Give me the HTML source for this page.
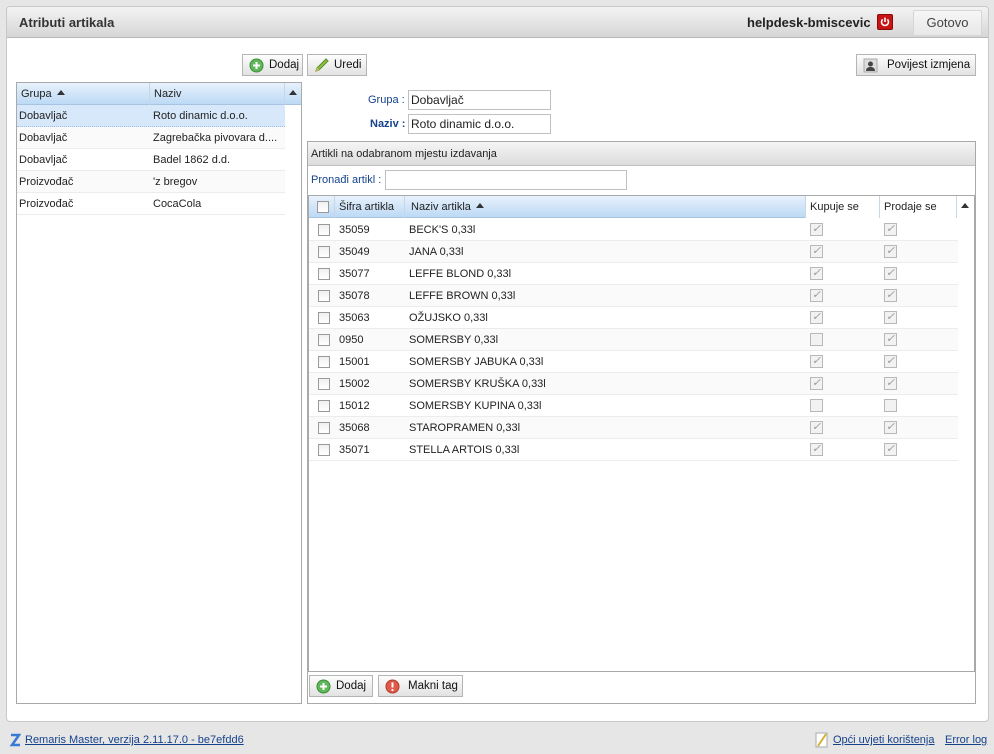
<!DOCTYPE html>
<html><head><meta charset="utf-8"><style>
*{box-sizing:border-box;margin:0;padding:0}
body{width:994px;height:754px;background:#e6e6e6;font-family:"Liberation Sans",Arial,sans-serif;font-size:11px;color:#222;position:relative;overflow:hidden}
.a{position:absolute}
.main{left:6px;top:6px;width:983px;height:716px;background:#fff;border:1px solid #c8c8c8;border-radius:4px}
.hdr{left:7px;top:7px;width:981px;height:31px;background:linear-gradient(#f3f3f3,#d6d6d6);border-bottom:1px solid #b8b8b8;border-radius:4px 4px 0 0}
.btn{position:absolute;height:22px;border:1px solid #b5b5b5;background:linear-gradient(#fdfdfd,#e2e2e2);font-size:11.5px;line-height:20px;padding-left:26px;color:#111;white-space:nowrap;overflow:hidden}
.btn svg{position:absolute;left:6px;top:3px}
.grid{border:1px solid #a9a9a9;background:#fff}
.gh{position:absolute;height:22px;background:linear-gradient(#e8f2fc,#bcd9f5);border-bottom:1px solid #a9c4e0;font-size:11px;line-height:22px}
.gh span{position:absolute;top:0;height:22px;padding-left:4px;border-right:1px solid #c6d6e6}
.row{position:absolute;height:22px;line-height:22px;border-bottom:1px solid #ececec;font-size:11px}
.row span{position:absolute;top:0}
.cb{position:absolute;width:12px;height:12px;border:1px solid #9a9a9a;background:linear-gradient(#f0f0f0,#fff)}
.ck{position:absolute;width:13px;height:13px;border:1px solid #b8b8b8;background:#f2f2f2;color:#999;font-size:11px;line-height:11px;text-align:center}
.inp{position:absolute;height:20px;border:1px solid #c0c0c0;background:#fff;font-size:12px;line-height:18px;padding-left:2px}
.arrow{display:inline-block;width:0;height:0;border-left:4px solid transparent;border-right:4px solid transparent;border-bottom:5px solid #333;vertical-align:2px;margin-left:5px}
</style></head><body>
<div class="a main"></div>
<div class="a hdr"></div>
<div class="a" style="left:19px;top:15px;font-size:13px;font-weight:bold;color:#333">Atributi artikala</div>
<div class="a" style="left:747px;top:15px;font-size:13px;font-weight:bold;color:#222">helpdesk-bmiscevic</div>
<div class="a" style="left:877px;top:14px;width:16px;height:16px;background:#c81414;border:1px solid #8a0a0a;border-radius:2px"><svg width="14" height="14" viewBox="0 0 16 16"><path d="M5.3 5 A4 4 0 1 0 10.7 5" stroke="#fff" stroke-width="1.8" fill="none"/><path d="M8 3v5" stroke="#fff" stroke-width="1.8"/></svg></div>
<div class="a" style="left:913px;top:10px;width:69px;height:26px;background:linear-gradient(#f6f6f6,#e8e8e8);border:1px solid #d6d6d6;border-radius:2px;font-size:13px;color:#444;text-align:center;line-height:24px">Gotovo</div>

<div class="btn" style="left:242px;top:54px;width:61px"><svg width="15" height="15"><circle cx="7.5" cy="7.5" r="6.5" fill="#5fb85a" stroke="#3d8c3a"/><path d="M7.5 4v7M4 7.5h7" stroke="#fff" stroke-width="2"/></svg>Dodaj</div>
<div class="btn" style="left:307px;top:54px;width:60px"><svg width="16" height="15"><path d="M2 13l3-1 9-9-2-2-9 9z" fill="#8cc63f" stroke="#5a8a2a"/><path d="M2 13l1-3 2 2z" fill="#e8c070"/></svg>Uredi</div>
<div class="btn" style="left:856px;top:54px;width:120px;padding-left:30px"><svg width="15" height="15"><rect x="1" y="1" width="13" height="13" fill="#ddd" stroke="#aaa"/><circle cx="7.5" cy="6" r="2.5" fill="#444"/><path d="M3 13c0-3 2-4 4.5-4s4.5 1 4.5 4z" fill="#444"/></svg>Povijest izmjena</div>

<div class="a grid" style="left:16px;top:82px;width:286px;height:622px"></div>
<div class="gh" style="left:17px;top:83px;width:284px"><span style="left:0;width:133px">Grupa<i class="arrow"></i></span><span style="left:133px;width:135px">Naziv</span><span style="left:268px;width:16px;border:none;padding-left:4px"><i class="arrow" style="margin:0"></i></span></div>
<div class="row" style="left:17px;top:105px;width:268px;background:#d6e8fa;border-bottom:1px dotted #a0bfe0"><span style="left:2px">Dobavljač</span><span style="left:136px">Roto dinamic d.o.o.</span></div>
<div class="row" style="left:17px;top:127px;width:268px;background:#fafafa"><span style="left:2px">Dobavljač</span><span style="left:136px">Zagrebačka pivovara d....</span></div>
<div class="row" style="left:17px;top:149px;width:268px"><span style="left:2px">Dobavljač</span><span style="left:136px">Badel 1862 d.d.</span></div>
<div class="row" style="left:17px;top:171px;width:268px;background:#fafafa"><span style="left:2px">Proizvođač</span><span style="left:136px">'z bregov</span></div>
<div class="row" style="left:17px;top:193px;width:268px"><span style="left:2px">Proizvođač</span><span style="left:136px">CocaCola</span></div>

<div class="a" style="left:368px;top:94px;font-size:11px;color:#15428b">Grupa :</div>
<div class="inp" style="left:408px;top:90px;width:143px">Dobavljač</div>
<div class="a" style="left:370px;top:118px;font-size:11px;font-weight:bold;color:#15428b">Naziv :</div>
<div class="inp" style="left:408px;top:114px;width:143px">Roto dinamic d.o.o.</div>

<div class="a" style="left:307px;top:141px;width:669px;height:563px;border:1px solid #a9a9a9;background:#fff"></div>
<div class="a" style="left:308px;top:142px;width:667px;height:24px;background:linear-gradient(#f5f5f5,#dcdcdc);border-bottom:1px solid #c0c0c0;font-size:11px;line-height:24px;padding-left:3px">Artikli na odabranom mjestu izdavanja</div>
<div class="a" style="left:311px;top:174px;color:#15428b">Pronađi artikl :</div>
<div class="inp" style="left:385px;top:170px;width:242px"></div>
<div class="a grid" style="left:308px;top:195px;width:667px;height:477px"></div>
<div class="gh" style="left:309px;top:196px;width:665px">
<span style="left:0;width:26px"><i class="cb" style="left:8px;top:5px"></i></span>
<span style="left:26px;width:70px">Šifra artikla</span>
<span style="left:96px;width:401px;padding-left:6px">Naziv artikla<i class="arrow"></i></span>
<span style="left:497px;width:74px;background:#fff;padding-left:4px">Kupuje se</span>
<span style="left:571px;width:77px;background:#fff;padding-left:4px">Prodaje se</span>
<span style="left:648px;width:17px;background:#fff;border:none;padding-left:4px"><i class="arrow" style="margin:0"></i></span></div>
<div id="rows"></div>
<script>
var d=[["35059","BECK'S 0,33l",1,1],["35049","JANA 0,33l",1,1],["35077","LEFFE BLOND 0,33l",1,1],["35078","LEFFE BROWN 0,33l",1,1],["35063","OŽUJSKO 0,33l",1,1],["0950","SOMERSBY 0,33l",0,1],["15001","SOMERSBY JABUKA 0,33l",1,1],["15002","SOMERSBY KRUŠKA 0,33l",1,1],["15012","SOMERSBY KUPINA 0,33l",0,0],["35068","STAROPRAMEN 0,33l",1,1],["35071","STELLA ARTOIS 0,33l",1,1]];
var h="";d.forEach(function(r,i){h+='<div class="row" style="left:309px;top:'+(219+i*22)+'px;width:649px;background:'+(i%2?'#fafafa':'#fff')+'"><i class="cb" style="left:9px;top:5px"></i><span style="left:30px">'+r[0]+'</span><span style="left:100px">'+r[1]+'</span><i class="ck" style="left:501px;top:4px">'+(r[2]?'✓':'')+'</i><i class="ck" style="left:575px;top:4px">'+(r[3]?'✓':'')+'</i></div>';});
document.getElementById("rows").innerHTML=h;
</script>
<div class="btn" style="left:309px;top:675px;width:64px"><svg width="15" height="15"><circle cx="7.5" cy="7.5" r="6.5" fill="#5fb85a" stroke="#3d8c3a"/><path d="M7.5 4v7M4 7.5h7" stroke="#fff" stroke-width="2"/></svg>Dodaj</div>
<div class="btn" style="left:378px;top:675px;width:85px;padding-left:29px"><svg width="15" height="15"><circle cx="7.5" cy="7.5" r="6.5" fill="#e05a4a" stroke="#b03a2a"/><path d="M7.5 3.5v5" stroke="#fff" stroke-width="2"/><circle cx="7.5" cy="11" r="1.1" fill="#fff"/></svg>Makni tag</div>

<svg class="a" style="left:9px;top:733px" width="12" height="14"><path d="M2 2h8L3 12h8" stroke="#3a7bd5" stroke-width="2.5" fill="none"/></svg>
<div class="a" style="left:25px;top:734px;font-size:11px;color:#15428b;text-decoration:underline">Remaris Master, verzija 2.11.17.0 - be7efdd6</div>
<svg class="a" style="left:815px;top:731px" width="14" height="18"><rect x="1" y="2" width="11" height="14" fill="#fff" stroke="#aaa"/><path d="M3 15l8-12" stroke="#d8b030" stroke-width="2"/></svg>
<div class="a" style="left:833px;top:734px;font-size:11px;color:#15428b;text-decoration:underline">Opći uvjeti korištenja </div>
<div class="a" style="left:945px;top:734px;font-size:11px;color:#15428b;text-decoration:underline">Error log</div>
</body></html>
